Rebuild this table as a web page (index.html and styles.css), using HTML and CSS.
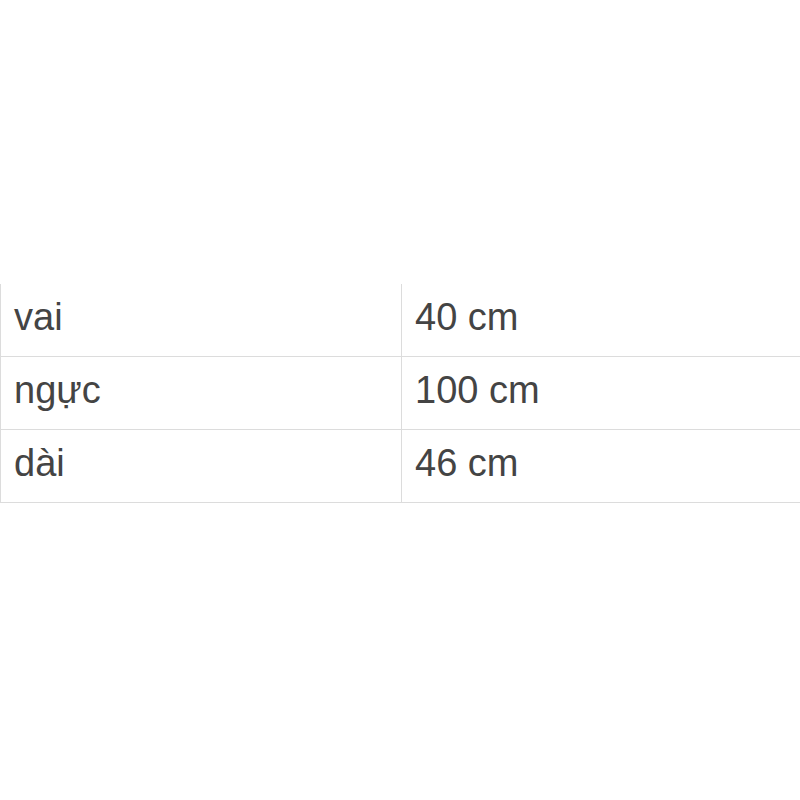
FILE: index.html
```html
<!DOCTYPE html>
<html>
<head>
<meta charset="utf-8">
<link rel="stylesheet" href="styles.css">
</head>
<body>
<div class="wrap">
<table class="spec">
<tr class="r1"><td class="k">vai</td><td class="v">40 cm</td></tr>
<tr class="r2"><td class="k">ngực</td><td class="v">100 cm</td></tr>
<tr class="r3"><td class="k">dài</td><td class="v">46 cm</td></tr>
</table>
</div>
</body>
</html>
```

FILE: styles.css
```css
html, body {
  margin: 0;
  padding: 0;
  background: #fff;
}
.wrap {
  padding-top: 284px;
  width: 820px;
}
.spec {
  border-collapse: collapse;
  width: 820px;
  font-family: "Liberation Sans", Arial, sans-serif;
  font-size: 38px;
  line-height: 1;
  color: #444;
}
.spec td {
  padding: 0 13px 6px 13px;
  border-left: 1px solid #dcdcdc;
  border-bottom: 1px solid #dcdcdc;
  vertical-align: middle;
  box-sizing: border-box;
}
.spec .r1 td { height: 72px; }
.spec .r2 td { height: 73px; }
.spec .r3 td { height: 73px; }
.spec td.k {
  width: 401px;
}
```
